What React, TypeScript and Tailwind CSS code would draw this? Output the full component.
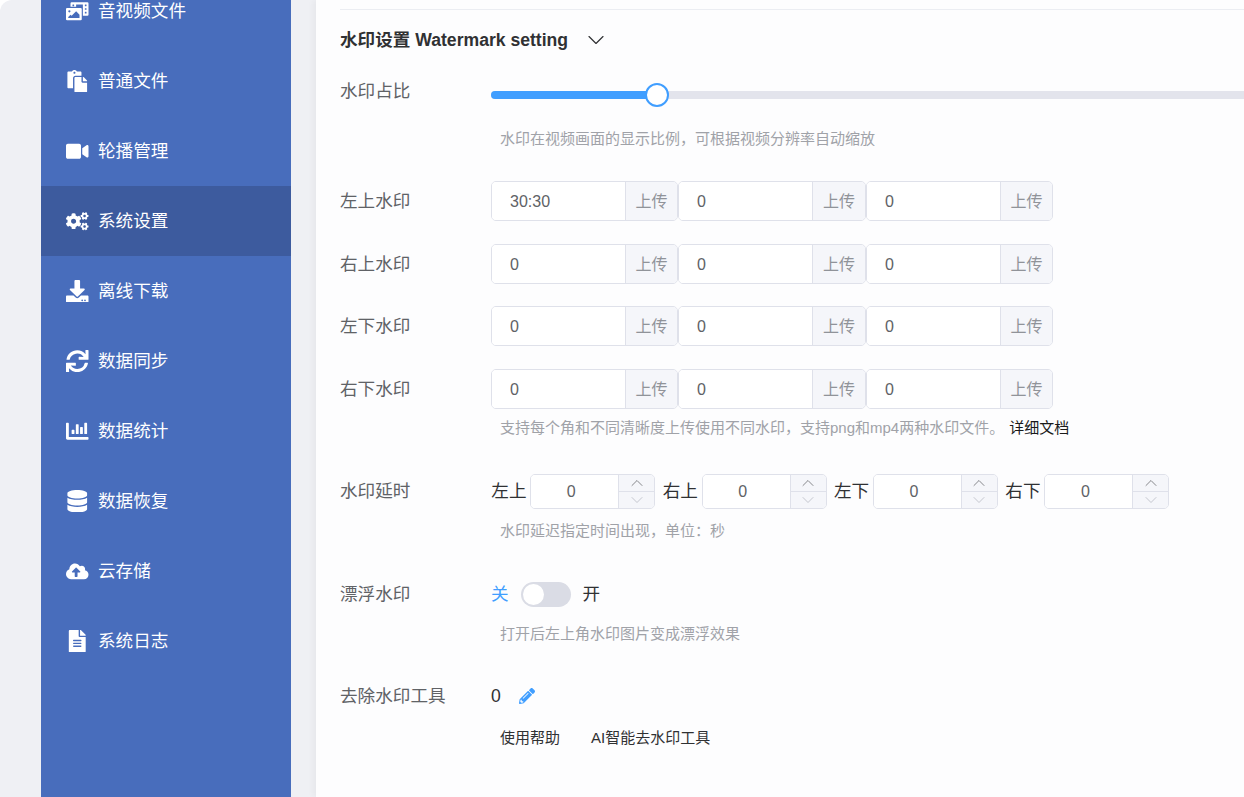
import { ChevronDown, ChevronUp } from "lucide-react";
import {
  FaPhotoVideo,
  FaPaste,
  FaVideo,
  FaCogs,
  FaDownload,
  FaSync,
  FaChartBar,
  FaDatabase,
  FaCloudUploadAlt,
  FaFileAlt,
  FaPencilAlt,
} from "react-icons/fa";

const nav = [
  { icon: FaPhotoVideo, label: "音视频文件" },
  { icon: FaPaste, label: "普通文件" },
  { icon: FaVideo, label: "轮播管理" },
  { icon: FaCogs, label: "系统设置", active: true },
  { icon: FaDownload, label: "离线下载" },
  { icon: FaSync, label: "数据同步" },
  { icon: FaChartBar, label: "数据统计" },
  { icon: FaDatabase, label: "数据恢复" },
  { icon: FaCloudUploadAlt, label: "云存储" },
  { icon: FaFileAlt, label: "系统日志" },
];

function Upload({ value, width, addon }: { value: string; width: string; addon: string }) {
  return (
    <div className={`flex h-10 ${width} overflow-hidden rounded-[5px] border border-[#dfe1ea]`}>
      <input
        readOnly
        value={value}
        className="min-w-0 flex-1 bg-white pl-[18px] pt-[2px] text-[16px] text-[#606266] outline-none"
      />
      <div
        className={`flex ${addon} shrink-0 items-center justify-center border-l border-[#dfe1ea] bg-[#f5f6fa] pt-[2px] text-[16px] text-[#909399]`}
      >
        上传
      </div>
    </div>
  );
}

function UploadRow({ label, first, className }: { label: string; first: string; className: string }) {
  return (
    <div className={`flex items-center ${className}`}>
      <div className="w-[151px] shrink-0 text-[17.6px] text-[#606266]">{label}</div>
      <Upload value={first} width="w-[187px]" addon="w-[52px]" />
      <Upload value="0" width="w-[188px]" addon="w-[53px]" />
      <Upload value="0" width="w-[187px]" addon="w-[52px]" />
    </div>
  );
}

function Stepper({ label }: { label: string }) {
  return (
    <div className="flex items-center">
      <span className="w-[39px] text-[17.6px] text-[#303133]">{label}</span>
      <div className="flex h-[35px] w-[125px] overflow-hidden rounded-[5px] border border-[#dfe1ea]">
        <div className="flex flex-1 items-center justify-center bg-white pr-[7px] text-[16px] text-[#606266]">0</div>
        <div className="flex w-9 flex-col border-l border-[#dfe1ea] bg-[#f5f6fa]">
          <div className="flex min-h-0 flex-1 items-center justify-center overflow-visible border-b border-[#dfe1ea] text-[#606266]">
            <ChevronUp size={20} strokeWidth={0.9} className="shrink-0" />
          </div>
          <div className="flex min-h-0 flex-1 items-center justify-center overflow-visible text-[#b4b7c0]">
            <ChevronDown size={20} strokeWidth={0.9} className="shrink-0" />
          </div>
        </div>
      </div>
    </div>
  );
}

function Hint({ children, className }: { children: React.ReactNode; className: string }) {
  return (
    <div className={`flex h-5 items-center pl-[160px] text-[15px] text-[#a0a2a8] ${className}`}>{children}</div>
  );
}

export default function App() {
  return (
    <div
      className="h-[797px] w-[1244px] overflow-hidden bg-white"
      style={{ fontFamily: '"Liberation Sans", "Noto Sans CJK SC", sans-serif' }}
    >
      <div className="flex h-full rounded-tl-[12px] bg-[#eff0f4] pl-[41px]">
        <aside className="mr-[25px] w-[250px] shrink-0 overflow-hidden bg-[#486dbc]">
          <ul className="-mt-6">
            {nav.map(({ icon: Icon, label, active }) => (
              <li
                key={label}
                className={`flex h-[70px] items-center gap-[9.5px] pl-[25px] text-[17.6px] text-white ${
                  active ? "bg-[#3d5b9e]" : ""
                }`}
              >
                <Icon size={22.5} className="shrink-0" />
                <span>{label}</span>
              </li>
            ))}
          </ul>
        </aside>
        <main className="min-w-0 flex-1 overflow-hidden bg-[#fdfdfe] pl-6 pt-[9px] shadow-[-3px_0_6px_rgba(0,0,0,0.04)]">
          <div className="border-t border-[#ebedf2]" />
          <div className="flex h-[60px] items-center">
            <h2 className="text-[17.6px] font-bold text-[#303133]">水印设置 Watermark setting</h2>
            <ChevronDown size={28} strokeWidth={1} className="ml-[14px] text-[#303133]" />
          </div>

          <div className="flex h-[42px] items-center">
            <div className="w-[151px] shrink-0 text-[17.6px] text-[#606266]">水印占比</div>
            <div className="relative -mr-4 mt-2 h-2 flex-1 rounded-full bg-[#e3e4ec]">
              <div className="h-2 w-[166px] rounded-full bg-[#409eff]" />
              <div className="absolute left-[154px] top-[-8px] h-6 w-6 rounded-full border-2 border-[#409eff] bg-white" />
            </div>
          </div>
          <Hint className="mt-[17px]">水印在视频画面的显示比例，可根据视频分辨率自动缩放</Hint>

          <UploadRow label="左上水印" first="30:30" className="mt-8" />
          <UploadRow label="右上水印" first="0" className="mt-[23px]" />
          <UploadRow label="左下水印" first="0" className="mt-[22px]" />
          <UploadRow label="右下水印" first="0" className="mt-[23px]" />
          <Hint className="mt-[9px]">
            支持每个角和不同清晰度上传使用不同水印，支持png和mp4两种水印文件。
            <span className="ml-[5px] text-[15px] text-[#1a1a1a]">详细文档</span>
          </Hint>

          <div className="mt-9 flex items-center">
            <div className="w-[151px] shrink-0 text-[17.6px] text-[#606266]">水印延时</div>
            <div className="ml-[0.3px] flex gap-[7.35px]">
              <Stepper label="左上" />
              <Stepper label="右上" />
              <Stepper label="左下" />
              <Stepper label="右下" />
            </div>
          </div>
          <Hint className="mt-3">水印延迟指定时间出现，单位：秒</Hint>

          <div className="mt-10 flex items-center">
            <div className="w-[151px] shrink-0 text-[17.6px] text-[#606266]">漂浮水印</div>
            <span className="text-[17.6px] text-[#409eff]">关</span>
            <div className="ml-3 flex h-[25px] w-[50px] items-center rounded-full bg-[#dadce5] pl-[2px]">
              <div className="h-[21px] w-[21px] rounded-full bg-white" />
            </div>
            <span className="ml-3 text-[17.6px] text-[#303133]">开</span>
          </div>
          <Hint className="mt-[17px]">打开后左上角水印图片变成漂浮效果</Hint>

          <div className="mt-10 flex h-6 items-center">
            <div className="w-[151px] shrink-0 text-[17.6px] text-[#606266]">去除水印工具</div>
            <span className="text-[17.6px] text-[#303133]">0</span>
            <FaPencilAlt size={16} className="ml-[18px] text-[#409eff]" />
          </div>
          <div className="mt-5 flex h-5 items-center gap-[31px] pl-[160px] text-[15px] text-[#303133]">
            <span>使用帮助</span>
            <span>AI智能去水印工具</span>
          </div>
        </main>
      </div>
    </div>
  );
}
